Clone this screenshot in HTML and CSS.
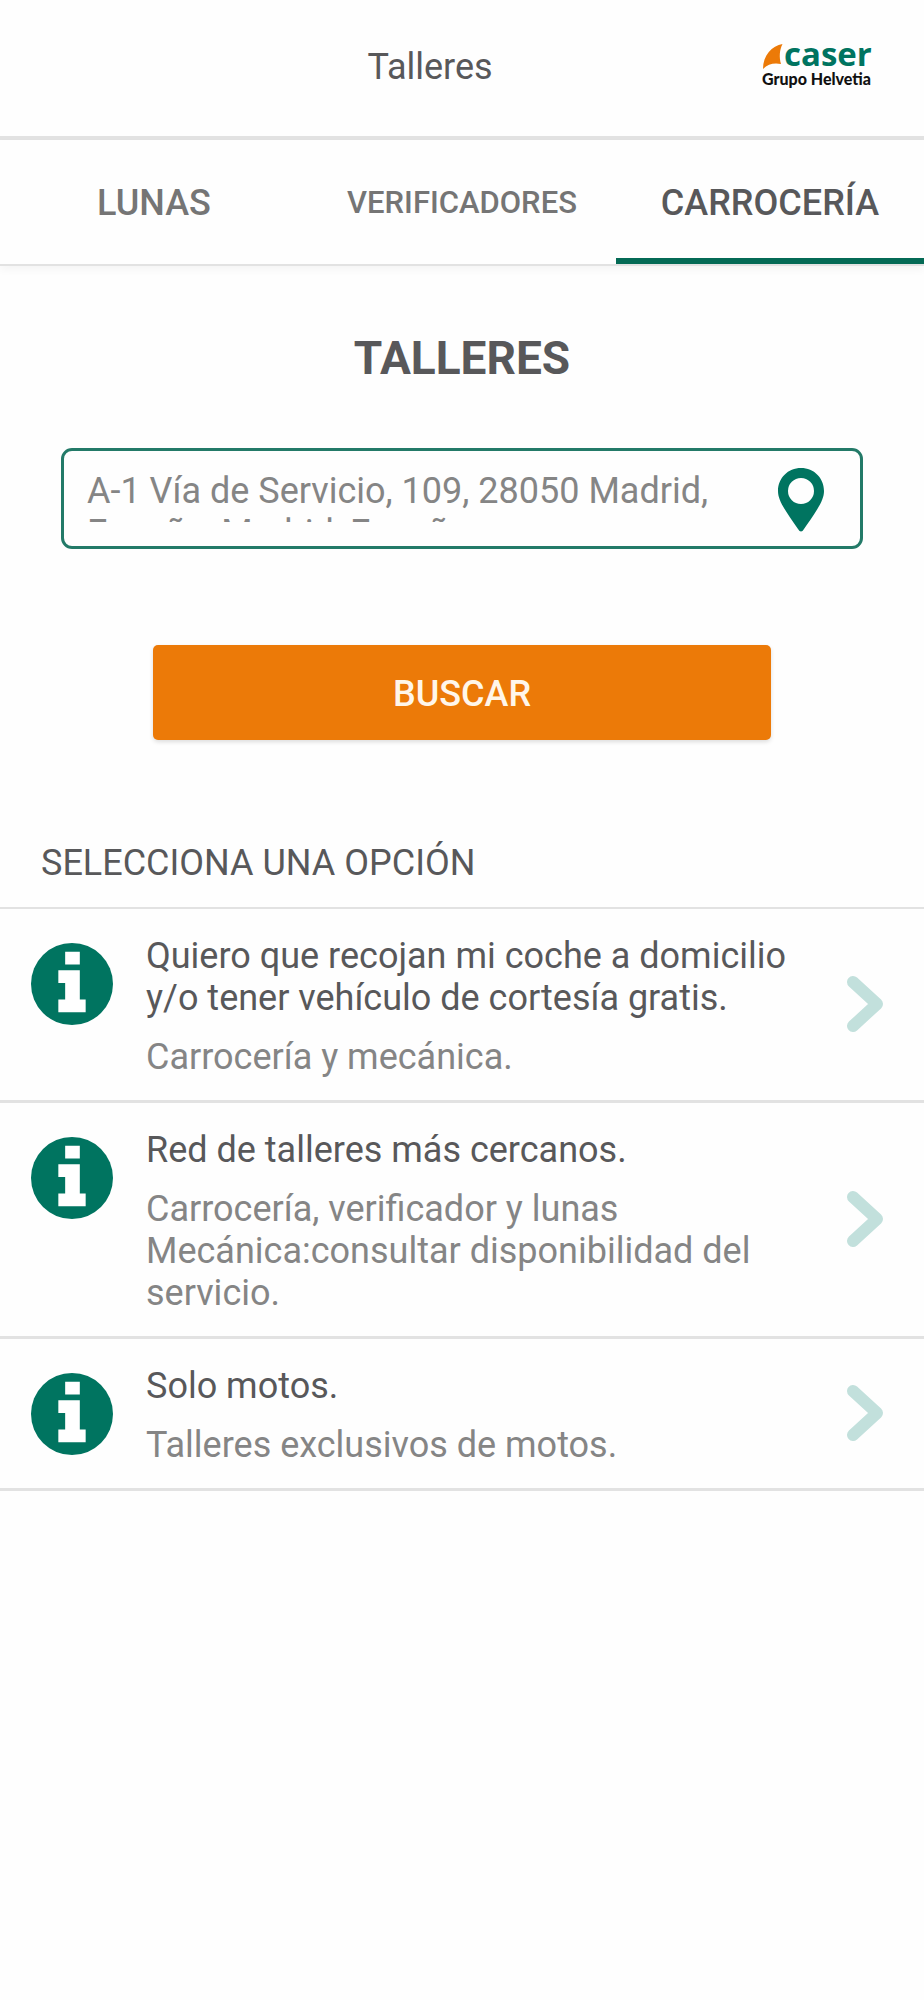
FILE: index.html
```html
<!DOCTYPE html>
<html lang="es">
<head>
<meta charset="utf-8">
<meta name="viewport" content="width=device-width, initial-scale=1">
<title>Talleres</title>
<link rel="stylesheet" href="styles.css">
</head>
<body>
<header class="topbar">
  <span class="topbar-title">Talleres</span>
  <svg class="logo" viewBox="0 0 112 50" role="img" aria-label="Caser Grupo Helvetia">
    <path class="logo-sail" d="M20.500 2C10 4 1 13 1 27C6 22 12 20.500 19 22C17 15 17.500 8 20.500 2Z"/>
    <text class="logo-name" x="22" y="24">caser</text>
    <text class="logo-group" x="0" y="43">Grupo Helvetia</text>
  </svg>
</header>

<nav class="tabs">
  <a class="tab" href="#lunas">LUNAS</a>
  <a class="tab tab-small" href="#verificadores">VERIFICADORES</a>
  <a class="tab tab-active" href="#carroceria" aria-current="page">CARROCERÍA</a>
</nav>

<main>
  <h1 class="title">TALLERES</h1>

  <form class="search">
    <div class="field">
      <textarea class="address" aria-label="Dirección">A-1 Vía de Servicio, 109, 28050 Madrid, España, Madrid, España</textarea>
      <button class="locate" type="button" aria-label="Usar mi ubicación">
        <svg class="pin" viewBox="0 0 48 66" aria-hidden="true">
          <path fill-rule="evenodd" d="M24 1C11 1 1 11 1 24C1 33 7 42 21 62Q24 67 27 62C41 42 47 33 47 24C47 11 37 1 24 1ZM24 11A13 13 0 1 1 24 37A13 13 0 1 1 24 11Z"/>
        </svg>
      </button>
    </div>
    <button class="submit" type="button">BUSCAR</button>
  </form>

  <h2 class="section-title">SELECCIONA UNA OPCIÓN</h2>
  <ul class="options">
    <li>
      <a class="option" href="#domicilio">
        <svg class="info" viewBox="0 0 84 84" aria-hidden="true"><circle cx="42" cy="42" r="42"/><path d="M35 9H50V22H35ZM28 28H50V58H56V71H28V58H35V41H28Z"/></svg>
        <span class="option-text">
          <span class="option-name">Quiero que recojan mi coche a domicilio y/o tener vehículo de cortesía gratis.</span>
          <span class="option-detail">Carrocería y mecánica.</span>
        </span>
        <svg class="chevron" viewBox="0 0 38 58" aria-hidden="true"><path d="M7 7L31 29L7 51"/></svg>
      </a>
    </li>
    <li>
      <a class="option" href="#red">
        <svg class="info" viewBox="0 0 84 84" aria-hidden="true"><circle cx="42" cy="42" r="42"/><path d="M35 9H50V22H35ZM28 28H50V58H56V71H28V58H35V41H28Z"/></svg>
        <span class="option-text">
          <span class="option-name">Red de talleres más cercanos.</span>
          <span class="option-detail">Carrocería, verificador y lunas<br>Mecánica:consultar disponibilidad del servicio.</span>
        </span>
        <svg class="chevron" viewBox="0 0 38 58" aria-hidden="true"><path d="M7 7L31 29L7 51"/></svg>
      </a>
    </li>
    <li>
      <a class="option" href="#motos">
        <svg class="info" viewBox="0 0 84 84" aria-hidden="true"><circle cx="42" cy="42" r="42"/><path d="M35 9H50V22H35ZM28 28H50V58H56V71H28V58H35V41H28Z"/></svg>
        <span class="option-text">
          <span class="option-name">Solo motos.</span>
          <span class="option-detail">Talleres exclusivos de motos.</span>
        </span>
        <svg class="chevron" viewBox="0 0 38 58" aria-hidden="true"><path d="M7 7L31 29L7 51"/></svg>
      </a>
    </li>
  </ul>
</main>
</body>
</html>
```

FILE: styles.css
```css
:root {
  --green: #007460;
  --orange: #ec7a08;
  --ink: #58585a;
  --muted: #858585;
  --line: #e2e2e2;
}

* {
  box-sizing: border-box;
}

body {
  margin: 0;
  background: #fefefe;
  color: var(--ink);
  font-family: Roboto, sans-serif;
  font-size: 36px;
  line-height: 42px;
}

a {
  color: inherit;
  text-decoration: none;
}

.topbar {
  display: flex;
  align-items: center;
  padding: 40px 50px 42px 98px;
  border-bottom: 4px solid var(--line);
}

.topbar-title {
  flex: 1;
  padding: 6px 0;
  text-align: center;
}

.logo {
  flex: none;
  width: 112px;
  height: 50px;
  overflow: visible;
}

.logo-sail {
  fill: var(--orange);
}

.logo-name {
  fill: var(--green);
  font-family: "Open Sans", sans-serif;
  font-size: 33px;
  font-weight: 700;
}

.logo-group {
  fill: #111;
  font-family: Lato, sans-serif;
  font-size: 16px;
  font-weight: 900;
}

.tabs {
  display: grid;
  grid-template-columns: repeat(3, 1fr);
  border-bottom: 2px solid var(--line);
  box-shadow: 0 4px 8px #0000000a;
}

.tab {
  display: grid;
  place-items: center;
  padding: 42px 0 34px;
  border-bottom: 6px solid transparent;
  color: #757575;
  font-weight: 500;
}

.tab-small {
  font-size: 31px;
}

.tab-active {
  border-bottom-color: #046a55;
  color: var(--ink);
}

.title {
  margin: 0;
  padding: 66px 0 64px;
  font-size: 46px;
  font-weight: 700;
  line-height: 52px;
  text-align: center;
}

.search {
  display: flex;
  flex-direction: column;
  align-items: center;
  gap: 96px;
  padding: 0 61px;
}

.field {
  display: flex;
  align-items: center;
  gap: 39px;
  width: 100%;
  padding: 16px 35px 13px 23px;
  border: 3px solid #237a68;
  border-radius: 11px;
}

.address {
  flex: 1;
  min-width: 0;
  height: 52px;
  margin: 0 0 8px;
  padding: 0;
  border: 0;
  outline: 0;
  resize: none;
  overflow: hidden;
  background: none;
  color: var(--muted);
  font: inherit;
}

.locate {
  display: flex;
  padding: 0;
  border: 0;
  background: none;
}

.pin {
  width: 48px;
  height: 66px;
  fill: var(--green);
}

.submit {
  width: 77%;
  padding: 28px 0 25px;
  border: 0;
  border-radius: 5px;
  background: var(--orange);
  box-shadow: 0 2px 4px #00000022;
  color: #fff6ea;
  font: inherit;
  font-weight: 500;
}

.section-title {
  margin: 0;
  padding: 102px 41px 23px;
  border-bottom: 2px solid var(--line);
  font-size: 36px;
  font-weight: 400;
}

.options {
  margin: 0;
  padding: 0;
  list-style: none;
}

.option {
  display: flex;
  align-items: center;
  gap: 33px;
  padding: 26px 40px 22px 31px;
  border-bottom: 3px solid var(--line);
}

.info {
  flex: none;
  align-self: flex-start;
  width: 82px;
  height: 82px;
  margin-top: 8px;
  fill: var(--green);
}

.info path {
  fill: #fff;
}

.option-text {
  display: flex;
  flex: 1;
  flex-direction: column;
  gap: 17px;
}

.option-detail {
  color: var(--muted);
}

.chevron {
  flex: none;
  width: 38px;
  height: 58px;
  margin-bottom: 6px;
  fill: none;
  stroke: #c2e0dc;
  stroke-width: 12;
  stroke-linecap: round;
  stroke-linejoin: round;
}
```
